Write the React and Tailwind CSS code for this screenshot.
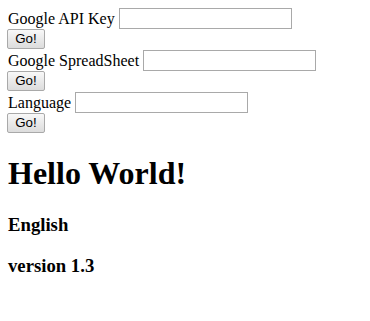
export default function App() {
  const rows = ["Google API Key", "Google SpreadSheet", "Language"];
  return (
    <div className="m-2 font-['Liberation_Serif',serif] text-base leading-[normal] text-black">
      {rows.map((r) => (
        <div key={r}>
          <div className="flex h-[21px] items-center gap-1">
            <span className="whitespace-nowrap">{r}</span>
            <input
              type="text"
              className="h-[21px] w-[173px] border border-[#a9a9a9] bg-white px-[2px] py-[1px] font-['Liberation_Sans',sans-serif] text-[13.33px] outline-none"
            />
          </div>
          <div className="flex h-[21px] items-start">
            <button className="-ml-px h-[20px] w-[38px] rounded-[2px] border border-[#a9a9a9] bg-gradient-to-b from-[#f8f8f8] to-[#dcdcdc] font-['Liberation_Sans',sans-serif] text-[13.33px] leading-none text-black">
              Go!
            </button>
          </div>
        </div>
      ))}
      <h1 className="my-[21.44px] text-[32px] font-bold leading-[normal]">Hello World!</h1>
      <h3 className="my-[18.72px] text-[18.72px] font-bold leading-[normal]">English</h3>
      <h3 className="my-[18.72px] text-[18.72px] font-bold leading-[normal]">version 1.3</h3>
    </div>
  );
}
